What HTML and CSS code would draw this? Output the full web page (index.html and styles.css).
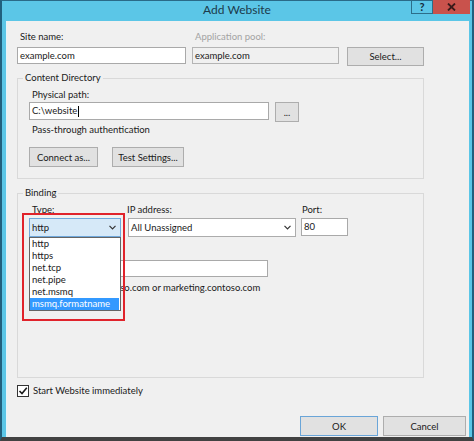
FILE: index.html
```html
<!DOCTYPE html>
<html lang="en">
<head>
<meta charset="UTF-8">
<meta name="viewport" content="width=device-width, initial-scale=1.0">
<title>Add Website</title>
<link rel="stylesheet" href="styles.css">
</head>
<body>
<div class="window">
    <div class="titlebar">
        <div></div>
        <div class="title">Add Website</div>
        <div class="caption-btns">
            <span class="cap-btn help">?</span>
            <span class="cap-btn close">
                <svg width="9" height="8" viewBox="0 0 9 8"><path d="M1 0.5 L8 7.5 M8 0.5 L1 7.5" stroke="#3a1a1a" stroke-width="1.8"/></svg>
            </span>
        </div>
    </div>

    <div class="client">
        <div class="top-row">
            <div class="field site-field">
                <label>Site name:</label>
                <div class="box">example.com</div>
            </div>
            <div class="field pool-field">
                <label class="disabled">Application pool:</label>
                <div class="box readonly">example.com</div>
            </div>
            <button class="btn select-btn">Select...</button>
        </div>

        <fieldset class="group content-dir">
            <legend>Content Directory</legend>
            <label>Physical path:</label>
            <div class="path-row">
                <div class="box path-box">C:\website<span class="caret"></span></div>
                <button class="btn browse-btn">...</button>
            </div>
            <div class="note">Pass-through authentication</div>
            <div class="btn-row">
                <button class="btn connect-btn">Connect as...</button>
                <button class="btn test-btn">Test Settings...</button>
            </div>
        </fieldset>

        <fieldset class="group binding">
            <legend>Binding</legend>
            <div class="binding-row">
                <div class="field type-field">
                    <label>Type:</label>
                    <div class="combo open">
                        <span>http</span>
                        <svg width="7" height="5" viewBox="0 0 7 5"><path d="M0.5 0.8 L3.5 3.8 L6.5 0.8" fill="none" stroke="#333" stroke-width="1.2"/></svg>
                    </div>
                    <ul class="dropdown">
                        <li>http</li>
                        <li>https</li>
                        <li>net.tcp</li>
                        <li>net.pipe</li>
                        <li>net.msmq</li>
                        <li class="selected">msmq.formatname</li>
                    </ul>
                    <div class="highlight"></div>
                </div>
                <div class="field ip-field">
                    <label>IP address:</label>
                    <div class="combo">
                        <span>All Unassigned</span>
                        <svg width="7" height="5" viewBox="0 0 7 5"><path d="M0.5 0.8 L3.5 3.8 L6.5 0.8" fill="none" stroke="#333" stroke-width="1.2"/></svg>
                    </div>
                </div>
                <div class="field port-field">
                    <label>Port:</label>
                    <div class="box port-box">80</div>
                </div>
            </div>
            <!-- label sits under the open list -->
            <label class="host-label">Host name:</label>
            <div class="box host-box"></div>
            <div class="note example">Example: www.contoso.com or marketing.contoso.com</div>
        </fieldset>

        <label class="check-row">
            <span class="checkbox">
                <svg width="10" height="10" viewBox="0 0 10 10"><path d="M1.5 5 L4 7.5 L8.8 1.8" fill="none" stroke="#1a1a1a" stroke-width="1.6"/></svg>
            </span>
            Start Website immediately
        </label>

        <div class="footer">
            <button class="btn ok-btn">OK</button>
            <button class="btn cancel-btn">Cancel</button>
        </div>
    </div>
</div>
</body>
</html>
```

FILE: styles.css
```css
* {
    box-sizing: border-box;
}

body {
    margin: 0;
    font-family: "Segoe UI", Lato, sans-serif;
    font-size: 9.5px;
    color: #1a1a1a;
    background-color: #404040;
}

/* window frame */
.window {
    width: 474px;
    height: 441px;
    display: flex;
    flex-direction: column;
    background-color: #5bc6e7;
    border-style: solid;
    border-width: 1px 2px 4px 2px;
    border-color: #2a6a88 #21607e #424242 #21607e;
}

.titlebar {
    height: 20px;
    flex-shrink: 0;
    display: grid;
    grid-template-columns: 1fr auto 1fr;
}

.title {
    font-size: 12px;
    line-height: 18px;
    color: #1b3b4c;
}

.caption-btns {
    justify-self: end;
    align-self: start;
    display: flex;
    margin-top: -1px;
    margin-right: 2px;
}

.cap-btn {
    height: 14px;
    display: flex;
    align-items: center;
    justify-content: center;
}

.help {
    width: 22px;
    border: 1px solid #2c6e8a;
    border-top: none;
    font-weight: bold;
    font-size: 11px;
    color: #13293a;
}

.close {
    width: 37px;
    background-color: #c9524c;
}

/* dialog body */
.client {
    flex: 1;
    margin: 0 3px 0 4px;
    padding: 9px 3px 1px 10px;
    background-color: #f0f0f0;
    border-left: 1px solid #e6f5fb;
    display: flex;
    flex-direction: column;
    align-items: flex-start;
}

label {
    display: block;
    line-height: 14px;
    padding-left: 3px;
}

label.disabled {
    color: #a3a3a3;
}

.box {
    height: 17px;
    line-height: 15px;
    padding: 0 2px;
    border: 1px solid #a9a9a9;
    background-color: #fff;
    white-space: nowrap;
}

.box.readonly {
    background-color: #f0f0f0;
    border-color: #b4b4b4;
}

.btn {
    font-family: inherit;
    font-size: 9.5px;
    color: #1a1a1a;
    padding: 0;
    height: 20px;
    background-color: #e1e1e1;
    border: 1px solid #adadad;
}

.top-row {
    width: 407px;
    display: flex;
    gap: 6px;
}

.top-row label {
    margin-bottom: 3px;
}

.site-field {
    width: 169px;
}

.pool-field {
    width: 147px;
}

.select-btn {
    width: 77px;
    height: 19px;
    margin-top: 17px;
    margin-left: 2px;
}

/* group boxes */
.group {
    width: 407px;
    min-width: 0;
    margin: 5px 0 0 0;
    padding: 3px 11px 11px 11px;
    border: 1px solid #d9d9d9;
}

.group legend {
    line-height: 14px;
    padding: 0 2px;
    margin-left: -6px;
}

.path-row {
    display: flex;
    align-items: flex-start;
    gap: 6px;
}

.path-box {
    width: 240px;
    height: 18px;
    line-height: 16px;
}

.caret {
    display: inline-block;
    width: 1px;
    height: 11px;
    margin-left: 1px;
    background-color: #000;
    vertical-align: middle;
}

.browse-btn {
    width: 24px;
}

.note {
    line-height: 14px;
    padding-left: 3px;
    margin-top: 1px;
}

.btn-row {
    display: flex;
    gap: 14px;
    margin-top: 10px;
}

.connect-btn {
    width: 69px;
}

.test-btn {
    width: 72px;
}

.content-dir {
    margin-top: 5px;
}

.binding {
    margin-top: 7px;
    padding-bottom: 82px;
}

.binding-row {
    display: flex;
}

.binding-row label {
    margin-bottom: 1px;
}

.type-field {
    position: relative;
    width: 92px;
    margin-right: 7px;
}

.ip-field {
    width: 168px;
    margin-right: 5px;
}

.ip-field label {
    padding-left: 0;
    margin-left: -1px;
}

.port-field {
    width: 47px;
}

.port-field label {
    padding-left: 1px;
}

.port-box {
    height: 18px;
    margin-top: 1px;
}

.combo {
    height: 19px;
    padding: 0 4px 0 2px;
    border: 1px solid #acacac;
    background-color: #fff;
    display: flex;
    align-items: center;
    justify-content: space-between;
}

.combo.open {
    background-color: #d6e9f8;
    border-color: #6fa8dc;
}

/* open list of the type combo */
.dropdown {
    position: absolute;
    top: 34px;
    left: 0;
    width: 92px;
    margin: 0;
    padding: 0;
    list-style: none;
    background-color: #fff;
    border: 1px solid #646464;
    z-index: 2;
}

.dropdown li {
    height: 12px;
    line-height: 12px;
    padding-left: 2px;
    margin-right: 1px;
}

.dropdown li.selected {
    background-color: #3399ff;
    color: #fff;
}

.highlight {
    position: absolute;
    left: -7px;
    top: 10px;
    width: 103px;
    height: 108px;
    border: 2px solid #e0232b;
    z-index: 3;
}

.host-label {
    visibility: hidden;
    margin-top: 5px;
    margin-bottom: 4px;
}

.host-box {
    width: 239px;
}

.example {
    margin-top: 4px;
}

.check-row {
    display: flex;
    align-items: center;
    gap: 4px;
    margin-top: 6px;
    padding-left: 0;
}

.checkbox {
    width: 12px;
    height: 12px;
    border: 1px solid #333;
    background-color: #fff;
    display: flex;
    align-items: center;
    justify-content: center;
}

.footer {
    margin-top: auto;
    align-self: flex-end;
    display: flex;
    gap: 5px;
}

.ok-btn {
    width: 78px;
    border-color: #6aa5d8;
}

.cancel-btn {
    width: 83px;
}
```
